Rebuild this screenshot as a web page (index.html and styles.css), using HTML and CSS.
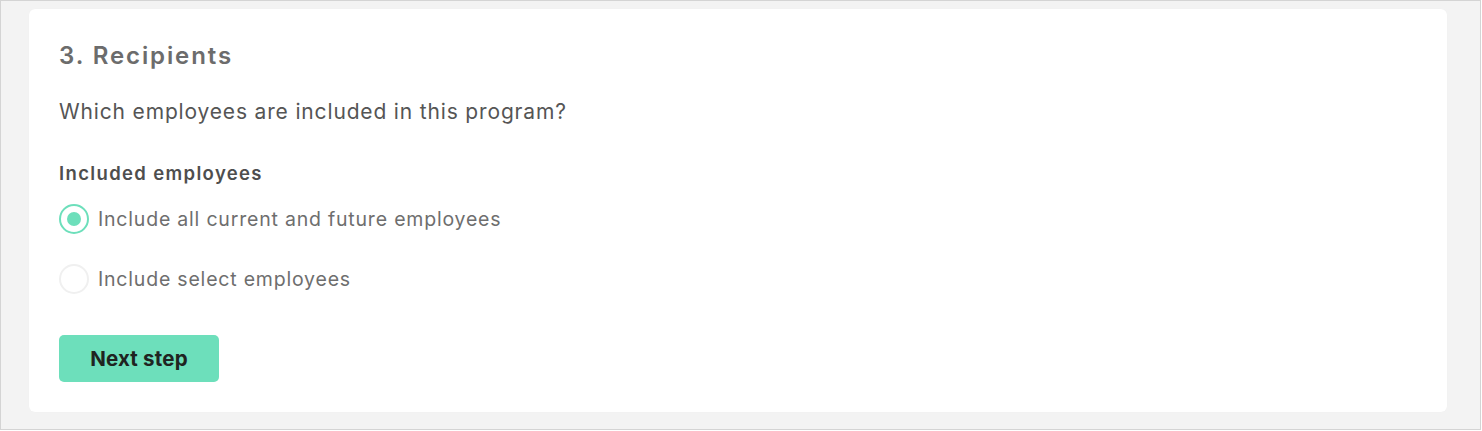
FILE: index.html
```html
<!DOCTYPE html>
<html lang="en">
<head>
<meta charset="utf-8">
<title>Recipients</title>
<link rel="stylesheet" href="styles.css">
</head>
<body>
<div class="frame">
  <section class="card">
    <h2 class="title">3. Recipients</h2>
    <p class="question">Which employees are included in this program?</p>
    <fieldset class="group">
      <legend class="group-label">Included employees</legend>
      <label class="option">
        <span class="radio checked"><span class="dot"></span></span>
        <span class="option-text">Include all current and future employees</span>
      </label>
      <label class="option">
        <span class="radio"></span>
        <span class="option-text">Include select employees</span>
      </label>
    </fieldset>
    <button class="next" type="button">Next step</button>
  </section>
</div>
</body>
</html>
```
FILE: styles.css
```css
* { box-sizing: border-box; }
html, body { margin: 0; padding: 0; background: #ffffff; }
body { font-family: Inter, "Noto Sans", "Liberation Sans", sans-serif; }

.frame {
  width: 1481px;
  height: 430px;
  border: 1px solid #d4d4d4;
  background: #f3f3f3;
  padding: 8px 33px 0 28px;
}

.card {
  background: #ffffff;
  border-radius: 6px;
  height: 403px;
  padding: 30px 30px 0 30px;
  box-shadow: 0 0 1px rgba(0,0,0,0.04);
}

.title {
  margin: 0;
  font-size: 24px;
  line-height: 34px;
  font-weight: 600;
  color: #6c6c6c;
  letter-spacing: 1.9px;
}

.question {
  margin: 24px 0 0 0;
  font-size: 21px;
  line-height: 30px;
  letter-spacing: 0.84px;
  color: #555555;
}

.group {
  border: 0;
  margin: 34px 0 0 0;
  padding: 0;
}

.group-label {
  padding: 0;
  font-size: 18.5px;
  line-height: 24px;
  font-weight: 600;
  letter-spacing: 1.35px;
  color: #4e4e4e;
}

.option {
  display: flex;
  align-items: center;
  gap: 9px;
  height: 30px;
  margin-top: 19px;
}
.option + .option { margin-top: 30px; }

.radio {
  width: 30px;
  height: 30px;
  border-radius: 50%;
  border: 2px solid #f0f0f0;
  display: flex;
  align-items: center;
  justify-content: center;
  flex: none;
}
.radio.checked { border-color: #6ddfbb; }
.dot {
  width: 14px;
  height: 14px;
  border-radius: 50%;
  background: #6ddfbb;
}

.option-text {
  font-size: 19.5px;
  letter-spacing: 0.8px;
  color: #6e6e6e;
}

.next {
  display: block;
  margin-top: 41px;
  width: 160px;
  height: 47px;
  border: 0;
  border-radius: 5px;
  background: #6ddfbb;
  color: #1f2421;
  font-family: inherit;
  font-size: 20.5px;
  font-weight: 700;
  letter-spacing: 0.2px;
  cursor: pointer;
}
```
